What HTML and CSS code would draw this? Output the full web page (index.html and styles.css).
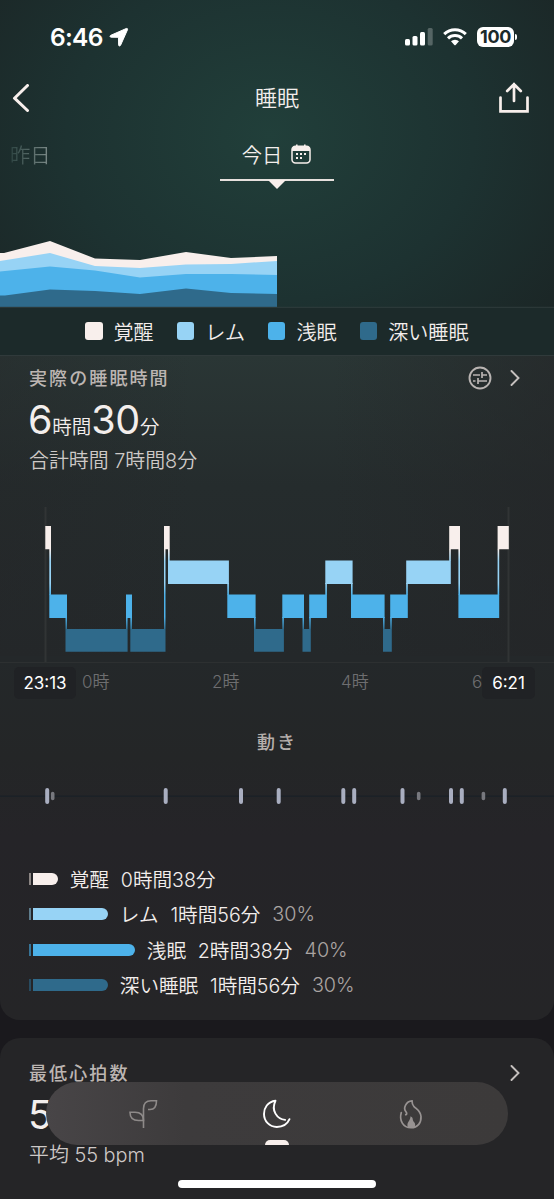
FILE: index.html
```html
<!DOCTYPE html>
<html lang="ja">
<head>
<meta charset="utf-8">
<title>睡眠</title>
<link rel="stylesheet" href="styles.css">
</head>
<body>
<div class="app">
  <header class="status">
    <span class="clock">6:46</span>
    <svg class="loc" width="20" height="20" viewBox="0 0 20 20"><path d="M17.300 1.500 1.800 8.300c-1.200.6-.9 1.900.3 1.900l7.400.1.100 7.600c0 1.200 1.500 1.500 2 .3L18.500 2.700c.4-.9-.300-1.600-1.200-1.200z" fill="#fff" stroke="#fff" stroke-width="1" stroke-linejoin="round"/></svg>
    <svg class="signal" width="28" height="18" viewBox="0 0 28 18"><g fill="#fff"><rect x="0" y="11" width="5" height="6.500" rx="1.500"/><rect x="7.500" y="8" width="5" height="9.500" rx="1.500"/><rect x="15" y="4" width="5" height="13.500" rx="1.500"/><rect x="22.700" y="0" width="5" height="17.500" rx="1.500" opacity=".25"/></g></svg>
    <svg class="wifi" width="24" height="18" viewBox="0 0 24 18"><g fill="none" stroke="#fff" stroke-width="3"><path d="M1.200 6.200a15.500 15.500 0 0 1 21.600 0"/><path d="M5 10.400a10 10 0 0 1 14 0"/></g><path d="M8 13.300a5.800 5.800 0 0 1 8 0l-3.300 3.600q-.7.700-1.400 0z" fill="#fff"/></svg>
    <span class="battery">100</span><i class="cap"></i>
  </header>
  <nav class="nav">
    <svg width="18" height="28" viewBox="0 0 18 28"><path d="M15.500 1.500 2.500 14.200 15.500 26.500" fill="none" stroke="#f8efec" stroke-width="3" stroke-linecap="round" stroke-linejoin="round"/></svg>
    <h1>睡眠</h1>
    <svg width="30" height="31" viewBox="0 0 30 31"><path d="M1.500 15.500v13.800h27V15.500M15 19V2M8.200 9 15 2.200 21.800 9" fill="none" stroke="#f8efec" stroke-width="2.700" stroke-linecap="round"/></svg>
  </nav>
  <div class="days">
    <span class="yesterday">昨日</span>
    <div class="today"><span>今日</span>
      <svg width="20" height="20" viewBox="0 0 20 20"><path d="M1 7V5.500A3.500 3.500 0 0 1 4.500 2h11A3.500 3.500 0 0 1 19 5.500V7z" fill="#f8efec"/><rect x="1" y="2.300" width="18" height="16.700" rx="3.500" fill="none" stroke="#f8efec" stroke-width="1.500"/><path d="M5.800.500v3M13.800.500v3" stroke="#f8efec" stroke-width="1.600"/><path d="M5 10h2M9 10h2M13 10h2M5 14h2M9 14h2" stroke="#f8efec" stroke-width="1.800"/></svg>
    </div>
  </div>
  <svg class="trend" width="554" height="120" viewBox="0 188 554 120">
    <path d="M0 253H4L50 241 95 258.500 140 260 186 252 231 258 277 256V307H0z" fill="#f8efec"/>
    <path d="M0 261 50 253 95 266 140 268 186 264.500 231 264 277 261V307H0z" fill="#97d3f5"/>
    <path d="M0 271.500 50 266.500 95 270.500 140 277.500 186 274 231 274 277 275V307H0z" fill="#4db2ea"/>
    <path d="M0 295.500H5L50 289.500 95 291 140 294 186 288.500 231 293 277 294V307H0z" fill="#2f6a8b"/>
    <path d="M0 307.300H554" stroke="#303c3d"/>
  </svg>
  <div class="legend">
    <span class="awake">覚醒</span><span class="rem">レム</span><span class="light">浅眠</span><span class="deep">深い睡眠</span>
  </div>
  <section class="card sleep">
    <div class="head"><h2>実際の睡眠時間</h2>
      <svg width="24" height="24" viewBox="0 0 24 24"><g fill="none" stroke="#b9b4b2" stroke-width="1.900"><circle cx="12" cy="12" r="10.500"/><path d="M5 9h7M14 6v6M14 9h5M5 15h2.500M10 12v6M10 15h9" stroke-width="1.700"/></g></svg>
      <svg width="10" height="16" viewBox="0 0 10 16"><path d="M1.500 1 8.500 8 1.500 15" fill="none" stroke="#c5c0be" stroke-width="1.900" stroke-linecap="round"/></svg>
    </div>
    <div class="big"><b>6</b>時間<b>30</b>分</div>
    <div class="sub">合計時間 7時間8分</div>
    <svg class="hypno" width="554" height="164" viewBox="0 500 554 164">
      <defs><linearGradient id="stage" gradientUnits="userSpaceOnUse" x1="0" y1="549" x2="0" y2="630"><stop offset="0" stop-color="#f8efec"/><stop offset=".15" stop-color="#97d3f5"/><stop offset=".42" stop-color="#97d3f5"/><stop offset=".57" stop-color="#4db2ea"/><stop offset=".84" stop-color="#4db2ea"/><stop offset="1" stop-color="#2f6a8b"/></linearGradient></defs>
      <path d="M45.500 507V662M508.500 507V662" stroke="#313435" stroke-width="2"/><path d="M0 662.500H554" stroke="#2d3031"/>
      <path fill="url(#stage)" d="M49.300 549h1.700v46h-1.700zM65.500 617h1.500v12h-1.500zM126 617h1.600v12H126zM130.300 617h1.700v12h-1.700zM164 549h1.500v80H164zM168 549h1.700v12H168zM227.300 583h1.600v12h-1.600zM254 617h1.600v12H254zM282.300 617h1.600v12h-1.600zM302.500 617h1.500v12h-1.500zM309.200 617h1.600v12h-1.600zM325.300 583h1.600v12h-1.600zM351 583h1.600v12H351zM383 617h1.600v12H383zM390.200 617h1.600v12h-1.600zM406.200 583h1.600v12h-1.600zM449.200 549h1.600v12h-1.600zM458.400 549h1.600v46h-1.600zM497.600 549h1.600v46h-1.600z"/>
      <path fill="#f8efec" d="M45.300 526H51v23.300h-5.700zM164 526h5.700v23.300H164zM449.200 526H460v23.300h-10.800zM497.600 526h11.200v23.300h-11.200z"/>
      <path fill="#97d3f5" d="M168 560.500h60.900V584H168zM325.300 560.500h27.300V584h-27.300zM406.200 560.500h44.600V584h-44.600z"/>
      <path fill="#4db2ea" d="M49.300 594.500H67V618H49.300zM126 594.500h6V618h-6zM227.300 594.500h28.300V618h-28.300zM282.300 594.500H304V618h-21.700zM309.200 594.500h17.700V618h-17.700zM351 594.500h33.600V618H351zM390.200 594.500h17.600V618h-17.600zM458.400 594.500h40.800V618h-40.800z"/>
      <path fill="#2f6a8b" d="M65.500 629h62.100v22.700H65.500zM130.300 629h35.200v22.700h-35.200zM254 629h29.900v22.700H254zM302.500 629h8.300v22.700h-8.300zM383 629h8.800v22.700H383z"/>
    </svg>
    <div class="axis"><span class="chip">23:13</span><span>0時</span><span>2時</span><span>4時</span><span>6</span><span class="chip">6:21</span></div>
    <h3>動き</h3>
    <svg class="motion" width="554" height="30" viewBox="0 781 554 30">
      <path d="M0 796.300H554" stroke="#1b2127" stroke-width="1.500"/>
      <path d="M47.200 790v12M165.700 790v12M241 790v12M278.700 790v12M343.300 790v12M354.200 790v12M402.500 790v12M451 790v12M461.800 790v12M504.800 790v12" stroke="#a9aec0" stroke-width="4" stroke-linecap="round"/>
      <path d="M52.700 793.500v5M418.700 793.500v5M483.400 793.500v5" stroke="#77787e" stroke-width="3.600" stroke-linecap="round"/>
    </svg>
    <div class="stats">
      <div class="row awake"><i></i><em></em><span>覚醒</span><span>0時間38分</span></div>
      <div class="row rem"><i></i><em></em><span>レム</span><span>1時間56分</span><small>30%</small></div>
      <div class="row light"><i></i><em></em><span>浅眠</span><span>2時間38分</span><small>40%</small></div>
      <div class="row deep"><i></i><em></em><span>深い睡眠</span><span>1時間56分</span><small>30%</small></div>
    </div>
  </section>
  <section class="card heart">
    <div class="head"><h2>最低心拍数</h2><svg width="10" height="16" viewBox="0 0 10 16"><path d="M1.500 1 8.500 8 1.500 15" fill="none" stroke="#c5c0be" stroke-width="1.900" stroke-linecap="round"/></svg></div>
    <div class="big"><b>5</b></div>
    <div class="sub">平均 55 bpm</div>
  </section>
  <div class="tabbar">
    <svg width="30" height="30" viewBox="0 0 30 30"><g fill="none" stroke="#8e8a89" stroke-width="1.600"><path d="M15.500 29V9.500q0-7.700 7.500-7.700h5.500q0 8.700-6.500 8.700h-2"/><path d="M15.500 21.500h-5Q2 21.500 2 13.200h5q8.500 0 8.500 8.300z"/></g></svg>
    <svg width="30" height="30" viewBox="0 0 30 30"><path d="M13.500 1.800C5.500 2.800 2 9 2 15c0 7.200 5.500 13 12.800 13 5.700 0 10.400-2.500 12.700-7.800M13.500 1.800c-4.800 9.700 1.500 18.200 9.600 19.100" fill="none" stroke="#fff" stroke-width="1.900" stroke-linecap="round"/></svg>
    <svg width="30" height="30" viewBox="0 0 30 30"><path d="M5.300 13.500C3 21.500 7 28.700 15 28.700c7 0 10.300-5.200 10-11.200-.4-5.700-4-7-7.200-10.200-1.300-1.500-1.800-3-1.800-5.500C10 2.300 7 9 9.800 12.500c1.500 2 .900 3.200-.100 3.200" fill="none" stroke="#989392" stroke-width="1.700" stroke-linecap="round"/><path d="M12 28.500c-1.500-4 .500-5.500 1.500-7.500.7-1.300.9-2 1-3.700 3.500 1.700 1.300 3.500 3.500 5.700 1.600 1.700 1.300 3.500.7 5.500z" fill="#989392"/></svg>
    <i class="active"></i>
  </div>
  <i class="home"></i>
</div>
</body>
</html>
```
FILE: styles.css
```css
* { box-sizing: border-box; }
body { margin: 0; background: #1a191d; }
.app {
  position: relative; width: 554px; height: 1199px; overflow: hidden;
  display: flex; flex-direction: column;
  font-family: Inter, "Noto Sans CJK JP", sans-serif; font-weight: 350; color: #f3eeec;
  background: radial-gradient(ellipse 370px 300px at 270px 135px, #213f3a 0%, #1d3231 55%, #1b2525 100%) no-repeat 0 0 / 554px 356px, #1a191d;
}
h1, h2, h3 { margin: 0; font-weight: 350; }
i, em { display: block; }
svg { display: block; flex: none; }
.status { height: 74px; display: flex; align-items: center; padding-left: 50px; color: #fff; }
.clock { width: 59px; font-size: 24.5px; font-weight: 600; letter-spacing: -.7px; }
.signal { margin-left: 276px; }
.wifi { margin-left: 10px; }
.battery { margin-left: 10px; width: 37px; height: 20px; border-radius: 6px; background: #fff; color: #1b2a2a; font-size: 18px; line-height: 20px; font-weight: 700; text-align: center; letter-spacing: -.4px; }
.cap { width: 2px; height: 6px; margin-left: 1px; background: #fff; border-radius: 0 2px 2px 0; }
.nav { height: 48px; padding: 0 25px 0 12px; display: flex; align-items: center; justify-content: space-between; }
.nav h1 { font-size: 22px; line-height: 30px; padding-left: 25px; }
.nav svg:last-child { margin-top: -1px; }
.days { height: 66px; display: grid; grid-template-columns: 220px 114px; padding-top: 17px; font-size: 20.3px; line-height: 34px; }
.yesterday { justify-self: start; margin-left: 10px; background: linear-gradient(90deg, #2e4543, #7f8d8b); background-clip: text; color: transparent; }
.today { display: flex; height: 42px; justify-content: center; align-items: start; gap: 9px; padding-right: 1px; border-bottom: 2px solid #e6e0dd; position: relative; }
.today svg { margin-top: 5px; }
.today::after { content: ""; position: absolute; top: 41px; left: 48px; border: 9px solid transparent; border-top-color: #f8efec; border-bottom: 0; }
.legend { height: 47px; padding: 0 0 1px 85px; display: flex; align-items: center; font-size: 20.1px; background: #1c2a2a; }
.legend span { display: flex; align-items: center; gap: 11px; margin-right: 23px; white-space: nowrap; }
.legend span::before { content: ""; width: 17.500px; height: 18px; border-radius: 3px; background: var(--c); }
.awake { --c: #f8efec; --d: #8b8583; --w: 25px; }
.rem { --c: #97d3f5; --d: #5f7d8d; --w: 75px; }
.light { --c: #4db2ea; --d: #377497; --w: 102px; }
.deep { --c: #2f6a8b; --d: #284b60; --w: 75px; }
.card { background: #252527; flex: none; }
.sleep { height: 665px; border-radius: 0 0 20px 20px; border-top: 1px solid #303a3b; background: linear-gradient(90deg, rgba(36,37,39,.35), transparent 35%, transparent 60%, rgba(36,37,39,.6)) no-repeat 0 0 / 100% 300px, linear-gradient(#2a3635 0, #252c2d 130px, #24282a 300px, #242627 400px, #252428 480px, #252527); }
.head { display: flex; align-items: center; height: 46px; padding: 0 34px 0 29px; }
.head h2 { flex: 1; font-size: 18px; font-weight: 500; letter-spacing: 2.1px; color: #bcb5b2; padding-bottom: 4px; }
.head svg { margin-top: -2px; }
.heart .head svg { margin-top: 1px; }
.heart .head h2 { padding-bottom: 0; }
.head svg + svg { margin-left: 18px; }
.big { padding-left: 28px; height: 40px; line-height: 36px; font-size: 19.5px; white-space: nowrap; }
.big b { font-size: 39.5px; font-weight: 370; letter-spacing: -.3px; }
.heart .big { line-height: 41px; }
.sub { padding-left: 29px; height: 36px; line-height: 38px; font-size: 19.9px; color: #cec9c7; white-space: nowrap; }
.hypno { margin-top: 22px; }
.axis { display: grid; grid-template-columns: 68px 130px 129px 131px 10px 53px; padding: 2px 0 0 14px; height: 36px; align-items: center; font-size: 17px; line-height: 28px; color: #6e6e70; }
.axis span:not(.chip) { padding-bottom: 2px; }
.chip { width: 62px; height: 32px; border-radius: 5px; background: #202225; color: #fff; font-weight: 400; line-height: 32px; text-align: center; }
.chip:last-child { width: 53px; }
.sleep h3 { margin-top: 28px; height: 29px; line-height: 29px; text-align: center; font-size: 18px; font-weight: 500; letter-spacing: 2px; color: #b5afac; }
.motion { margin-top: 24px; }
.stats { padding: 50px 0 0 29px; }
.row { display: flex; align-items: center; height: 35.500px; font-size: 19.6px; white-space: nowrap; }
.row i { width: 2px; height: 12px; background: var(--d); margin-right: 2px; }
.row em { width: var(--w); height: 12px; border-radius: 0 6px 6px 0; background: var(--c); }
.row span { margin: -1px 0 0 11.800px; }
.row small { margin-left: 12px; font-size: 19.8px; color: #aaa4a2; }
.heart { margin-top: 18px; height: 161px; border-radius: 20px 20px 0 0; padding-top: 11px; }
.heart .sub { line-height: 41px; }
.tabbar { position: absolute; left: 46px; top: 1082px; width: 462px; height: 63px; border-radius: 32px; background: linear-gradient(90deg, #484547, #3d3b3c 30%, #3c3a3a); display: grid; grid-template-columns: 134px 134px 134px; justify-content: center; justify-items: center; align-items: center; }
.active { position: absolute; left: 219px; bottom: 0; width: 24px; height: 5px; border-radius: 5px 5px 0 0; background: #f8efec; }
.home { position: absolute; left: 178px; top: 1180px; width: 198px; height: 8px; border-radius: 4px; background: #fff; }
```
